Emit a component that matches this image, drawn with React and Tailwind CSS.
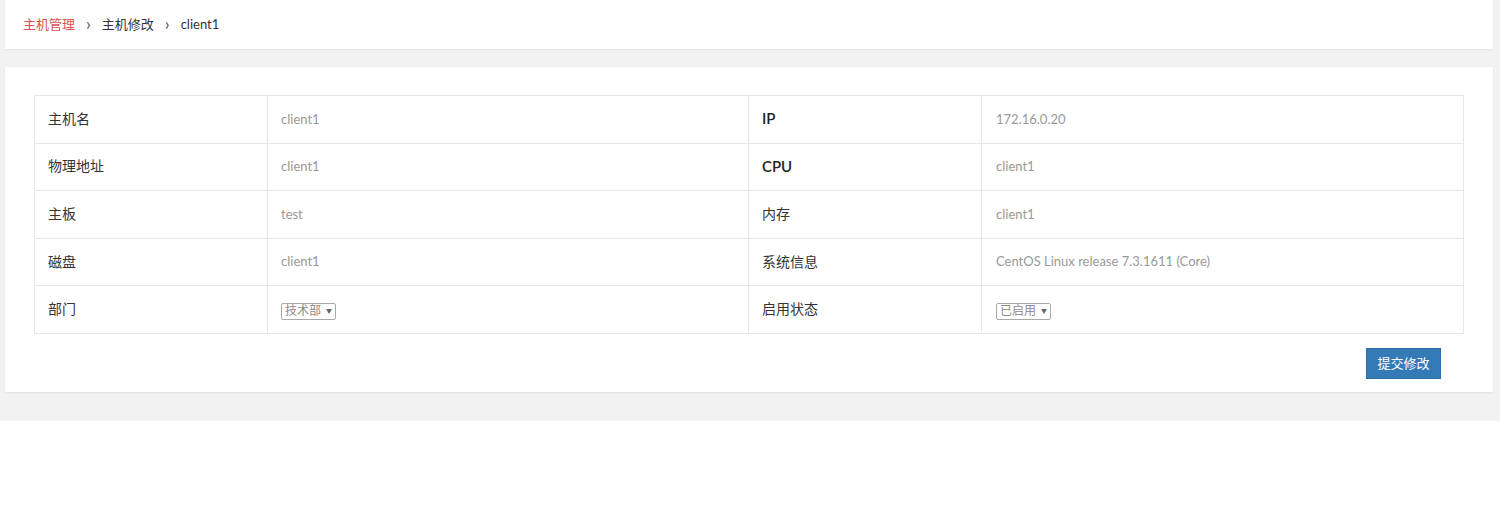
import React from "react";

const rows = [
  ["主机名", "client1", "IP", "172.16.0.20"],
  ["物理地址", "client1", "CPU", "client1"],
  ["主板", "test", "内存", "client1"],
  ["磁盘", "client1", "系统信息", "CentOS Linux release 7.3.1611 (Core)"],
];

const Select = ({ value }) => (
  <span className="inline-flex items-center h-[17px] border border-[#a9a9a9] rounded-[2px] px-[3px] text-[12px] text-[#8a8a8a] bg-white leading-none">
    {value}
    <span className="ml-[5px] text-[6px] text-[#666]">▼</span>
  </span>
);

const isLatin = (s) => /^[A-Z]+$/.test(s);

export default function App() {
  return (
    <div
      className="bg-[#f2f2f2] h-[421px] pl-[5px] pr-[7px]"
      style={{ fontFamily: "Lato, 'Open Sans', 'Noto Sans CJK SC', sans-serif" }}
    >
      {/* breadcrumb */}
      <div className="bg-white h-[49px] flex items-center px-[18px] text-[13px] shadow-[0_1px_2px_rgba(0,0,0,0.06)]">
        <span className="text-[#d9534f]">主机管理</span>
        <span className="mx-[11px] text-[#555] text-[17px] leading-none -mt-[2px]">›</span>
        <span className="text-[#333]">主机修改</span>
        <span className="mx-[11px] text-[#555] text-[17px] leading-none -mt-[2px]">›</span>
        <span className="text-[#333]">client1</span>
      </div>

      <div className="mt-[18px] bg-white h-[325px] pt-[28px] px-[29px] shadow-[0_1px_2px_rgba(0,0,0,0.08)]">
        <table className="w-full border-collapse text-[14px]">
          <colgroup>
            <col className="w-[233px]" />
            <col className="w-[481px]" />
            <col className="w-[233px]" />
            <col />
          </colgroup>
          <tbody>
            {rows.map((r) => (
              <tr key={r[0]} className="h-[47.6px]">
                <td className="border border-[#e7e7e7] px-[13px] pb-[2px] text-[#333]">{r[0]}</td>
                <td className="border border-[#e7e7e7] px-[13px] text-[13px] text-[#999]">{r[1]}</td>
                <td
                  className={
                    isLatin(r[2])
                      ? "border border-[#e7e7e7] px-[13px] pb-[2px] text-[#222] font-semibold text-[15px]"
                      : "border border-[#e7e7e7] px-[13px] pb-[2px] text-[#333]"
                  }
                >
                  {r[2]}
                </td>
                <td className="border border-[#e7e7e7] px-[14px] text-[13px] text-[#999]">{r[3]}</td>
              </tr>
            ))}
            <tr className="h-[47.6px]">
              <td className="border border-[#e7e7e7] px-[13px] pb-[2px] text-[#333]">部门</td>
              <td className="border border-[#e7e7e7] px-[13px]">
                <Select value="技术部" />
              </td>
              <td className="border border-[#e7e7e7] px-[13px] pb-[2px] text-[#333]">启用状态</td>
              <td className="border border-[#e7e7e7] px-[14px]">
                <Select value="已启用" />
              </td>
            </tr>
          </tbody>
        </table>
        <div className="flex justify-end mt-[14px] pr-[23px]">
          <button className="bg-[#337ab7] text-white text-[13px] w-[75px] h-[31px] border border-[#2e6da4]">
            提交修改
          </button>
        </div>
      </div>
    </div>
  );
}
